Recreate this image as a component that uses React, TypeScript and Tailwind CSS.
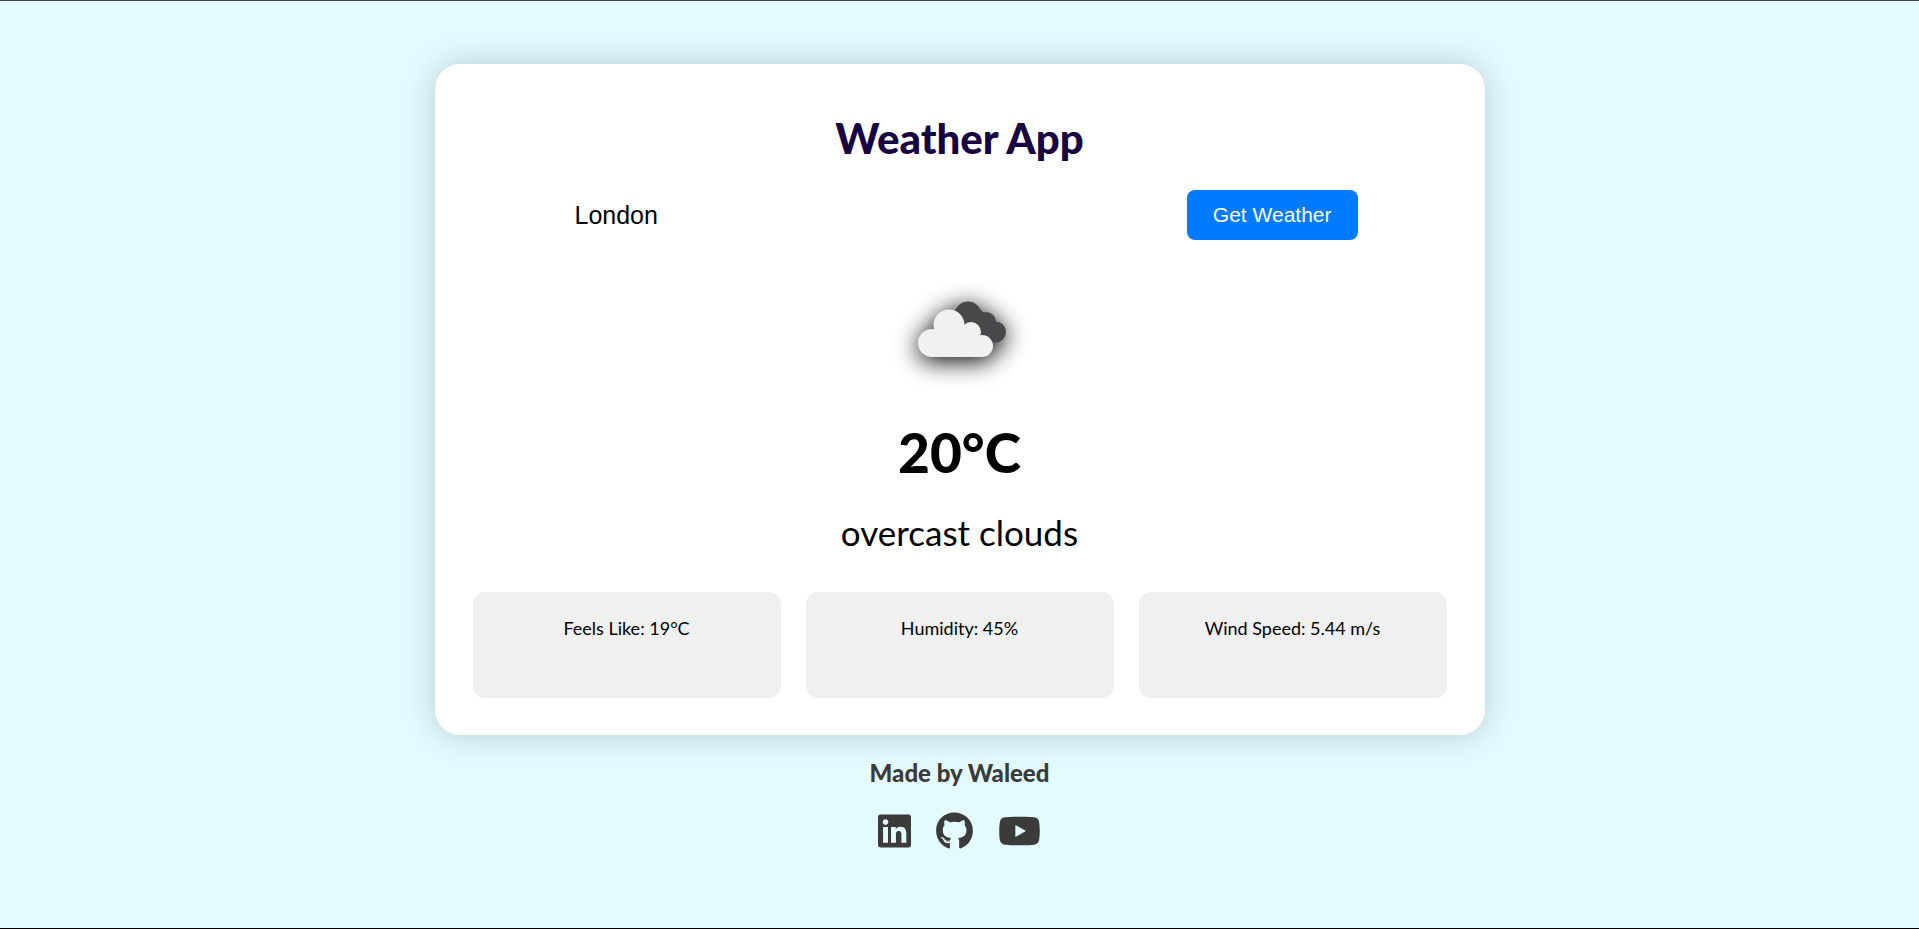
import { useState } from "react";
import { FaGithub, FaLinkedin, FaYoutube } from "react-icons/fa";

const details = [
  { label: "Feels Like", value: "19°C" },
  { label: "Humidity", value: "45%" },
  { label: "Wind Speed", value: "5.44 m/s" },
];

const links = [
  { name: "LinkedIn", href: "https://www.linkedin.com", Icon: FaLinkedin, width: "w-[33px]" },
  { name: "GitHub", href: "https://github.com", Icon: FaGithub, width: "w-[37px]" },
  { name: "YouTube", href: "https://www.youtube.com", Icon: FaYoutube, width: "w-[43px]" },
];

function OvercastIcon() {
  return (
    <svg
      viewBox="0 0 140 110"
      role="img"
      aria-label="overcast clouds"
      className="mt-10 h-[110px] w-[140px] overflow-visible drop-shadow-[0_4px_12px_rgba(0,0,0,1)]"
    >
      <g fill="#48484a">
        <circle cx="78" cy="35" r="13.5" />
        <circle cx="96" cy="42" r="10" />
        <circle cx="105.5" cy="52" r="10.5" />
        <path d="M78 34L90 29L97 36L106 46V62L98 60L70 46Z" />
      </g>
      <g fill="#f1f1f1">
        <circle cx="42" cy="63" r="14" />
        <circle cx="59" cy="45" r="15.5" />
        <circle cx="81" cy="52" r="10" />
        <circle cx="92" cy="66" r="11" />
        <path d="M42 77V50L59 42L74 46L86 56L92 60V77Z" />
      </g>
    </svg>
  );
}

export default function App() {
  const [city, setCity] = useState("London");

  return (
    <div className="flex min-h-screen flex-col items-center border-y border-t-[#444] border-b-black bg-[#e3fbff] px-4 pt-[63px] pb-10 font-['Gill_Sans_MT','Gill_Sans',Lato,sans-serif] text-black">
      <main className="flex w-full max-w-[1050px] flex-col items-center rounded-[25px] bg-white p-[38px] pb-[37px] shadow-[0_0_32px_rgba(0,0,0,0.2)]">
        <h1 className="mt-3 text-[42px] leading-[48px] font-black text-[#170041]">Weather App</h1>

        <form
          className="mt-7 flex w-full items-center gap-6 px-[89px] font-['Liberation_Sans',Arial,sans-serif]"
          onSubmit={(event) => event.preventDefault()}
        >
          <input
            type="text"
            aria-label="City"
            value={city}
            onChange={(event) => setCity(event.target.value)}
            className="h-[50px] min-w-0 flex-1 bg-white px-[13px] text-[25px] outline-none"
          />
          <button type="submit" className="h-[50px] rounded-lg bg-[#007bff] px-[26px] text-[21px] whitespace-nowrap text-white">
            Get Weather
          </button>
        </form>

        <OvercastIcon />

        <p className="mt-8 text-[55px] leading-[60px] font-black">20°C</p>
        <p className="mt-7 text-[35px] leading-[44px]">overcast clouds</p>

        <div className="mt-[38px] grid w-full grid-cols-3 gap-[25px]">
          {details.map(({ label, value }) => (
            <p key={label} className="min-h-[106px] rounded-xl bg-[#f0f0f0] px-4 pt-6 text-center text-[18px] leading-6">
              {label}: {value}
            </p>
          ))}
        </div>
      </main>

      <footer className="mt-6 flex flex-col items-center text-[#3b3b3b]">
        <p className="text-[24px] leading-7 font-black">Made by Waleed</p>
        <nav aria-label="Social links" className="mt-[25px] flex items-center gap-[25px]">
          {links.map(({ name, href, Icon, width }) => (
            <a key={name} href={href} aria-label={name}>
              <Icon className={`h-[38px] ${width}`} />
            </a>
          ))}
        </nav>
      </footer>
    </div>
  );
}
